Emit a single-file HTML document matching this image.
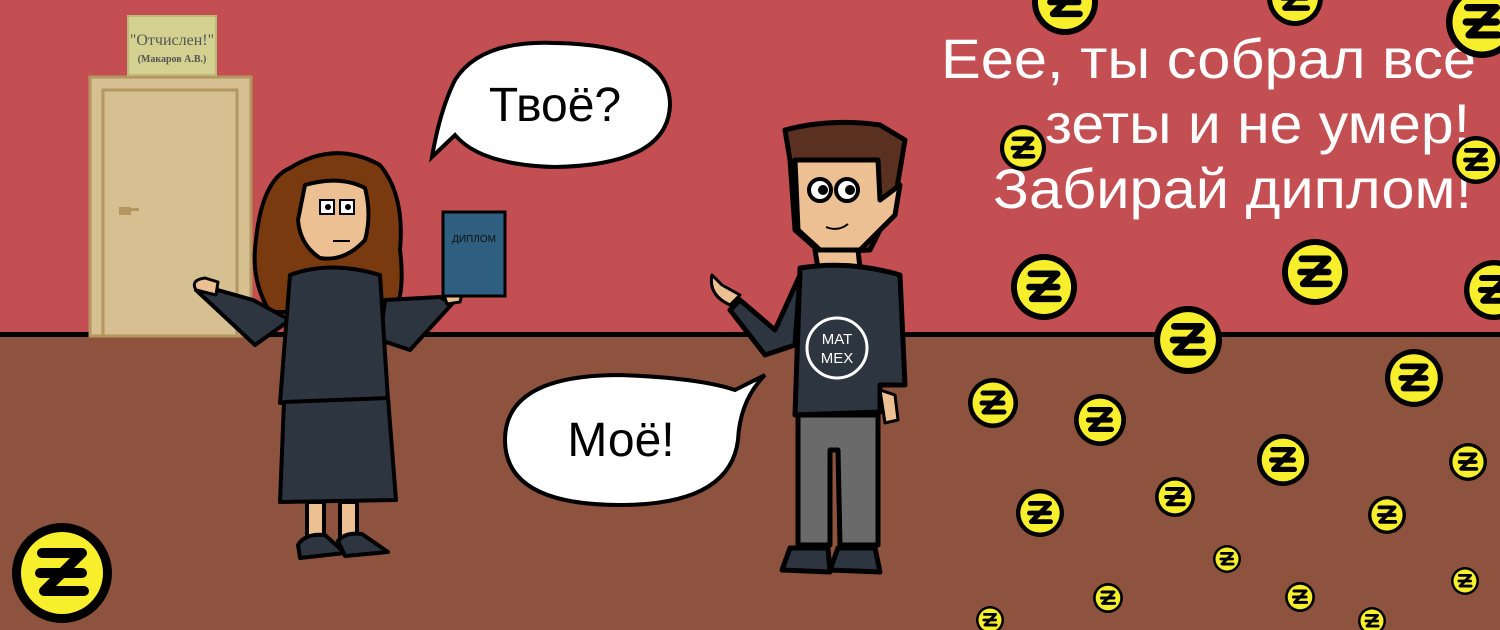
<!DOCTYPE html>
<html><head><meta charset="utf-8"><style>html,body{margin:0;padding:0;}svg{display:block}</style></head>
<body>
<svg width="1500" height="630" viewBox="0 0 1500 630" xmlns="http://www.w3.org/2000/svg" font-family="Liberation Sans, sans-serif">
<defs>
<g id="c">
<circle r="50" fill="#000"/><circle r="41" fill="#f8ef2c"/>
<path d="M-20,-20 H20 L-18,18 H22 M-22,0 H20" fill="none" stroke="#000" stroke-width="10" stroke-linecap="round" stroke-linejoin="round"/>
</g>
</defs>
<rect width="1500" height="336" fill="#c44f52"/>
<rect y="336" width="1500" height="294" fill="#8d533e"/>
<rect y="332" width="1500" height="5" fill="#000"/>

<!-- door -->
<rect x="90" y="77" width="161" height="259" fill="#d6bf91" stroke="#b39660" stroke-width="3"/>
<rect x="103" y="90" width="134" height="246" fill="#d6bf91" stroke="#b39660" stroke-width="3"/>
<rect x="119" y="207" width="12" height="8" fill="#b39660"/><rect x="130" y="208" width="9" height="3" fill="#b39660"/>
<!-- sign -->
<rect x="128" y="16" width="88" height="59" fill="#d4d090" stroke="#bcb877" stroke-width="2"/>
<text x="172" y="45" font-family="Liberation Serif, serif" font-size="16" fill="#555" text-anchor="middle">"Отчислен!"</text>
<text x="172" y="62" font-family="Liberation Serif, serif" font-size="10" font-weight="bold" fill="#555" text-anchor="middle">(Макаров А.В.)</text>

<!-- woman -->
<g stroke="#000" stroke-width="4" stroke-linejoin="round">
<path d="M290,168 Q335,140 380,165 Q405,195 400,250 Q405,290 395,312 L270,312 Q250,280 256,240 Q262,180 290,168Z" fill="#7a3a10"/>
<path d="M305,185 Q340,175 365,188 Q372,215 365,240 Q345,262 320,258 Q300,245 298,220Z" fill="#ecc093"/>
<path d="M253,300 L200,285 L196,290 L255,345 L290,320Z" fill="#2d3640"/>
<path d="M385,300 L440,297 L452,304 L410,350 L380,340Z" fill="#2d3640"/>
<path d="M290,275 Q330,260 380,275 L388,400 L280,403Z" fill="#2d3640"/>
<path d="M284,402 L388,398 L396,500 L280,502Z" fill="#2d3640"/>
<rect x="307" y="502" width="17" height="35" fill="#ecc093"/><rect x="340" y="502" width="17" height="35" fill="#ecc093"/>
<path d="M298,545 Q305,533 325,535 L345,553 L300,558Z" fill="#2d3640"/>
<path d="M338,541 Q345,532 362,534 L388,552 L345,556Z" fill="#2d3640"/>
<path d="M196,290 Q190,280 205,278 L218,282 L216,295Z" fill="#ecc093" stroke-width="3"/>
<path d="M443,292 L463,290 L460,302 L447,304Z" fill="#ecc093" stroke-width="3"/>
</g>
<rect x="320" y="200" width="14" height="14" fill="#fff" stroke="#000" stroke-width="2"/>
<rect x="340" y="200" width="14" height="14" fill="#fff" stroke="#000" stroke-width="2"/>
<circle cx="328" cy="207" r="3"/><circle cx="348" cy="207" r="3"/>
<line x1="333" y1="241" x2="350" y2="241" stroke="#000" stroke-width="2"/>
<rect x="443" y="212" width="62" height="84" fill="#2e5e80" stroke="#000" stroke-width="3"/>
<text x="474" y="242" font-size="10" text-anchor="middle" fill="#111">ДИПЛОМ</text>

<!-- man -->
<g stroke="#000" stroke-width="5" stroke-linejoin="round">
<path d="M790,160 L785,130 Q830,118 880,125 L905,140 L895,200 L870,250 L820,252 L795,230Z" fill="#5a3120"/>
<path d="M795,160 L878,160 L880,200 L900,185 L895,215 L875,235 L860,250 L820,250 L798,230Z" fill="#ecc093"/>
<path d="M815,250 L858,250 L860,268 L818,268Z" fill="#ecc093"/>
<path d="M800,268 Q850,260 900,275 L905,385 L880,385 L880,412 L795,415Z" fill="#2d3640"/>
<path d="M800,275 L775,330 L740,300 L730,310 L765,355 L795,345Z" fill="#2d3640"/>
<path d="M730,305 Q708,295 712,275 L722,285 L740,295Z" fill="#ecc093" stroke-width="3"/>
<path d="M880,390 L895,395 L898,420 L885,423Z" fill="#ecc093" stroke-width="3"/>
<path d="M798,415 L878,415 L878,545 L840,545 L838,450 L830,450 L830,545 L798,545Z" fill="#6a6a6a"/>
<path d="M782,570 L790,548 L828,548 L830,572Z" fill="#2d3640"/>
<path d="M830,570 L838,548 L875,548 L880,572Z" fill="#2d3640"/>
</g>
<circle cx="820" cy="190" r="11" fill="#fff" stroke="#000" stroke-width="4"/><circle cx="847" cy="190" r="11" fill="#fff" stroke="#000" stroke-width="4"/>
<circle cx="823" cy="190" r="5"/><circle cx="850" cy="190" r="5"/>
<path d="M826,227 Q838,232 848,224" fill="none" stroke="#000" stroke-width="2"/>
<circle cx="837" cy="348" r="30" fill="none" stroke="#fff" stroke-width="3"/>
<text x="837" y="344" font-size="15" fill="#fff" text-anchor="middle">MAT</text>
<text x="837" y="363" font-size="15" fill="#fff" text-anchor="middle">MEX</text>

<!-- bubbles -->
<g fill="#fff" stroke="#000" stroke-width="4">
<path d="M455,80 Q480,40 555,43 Q670,45 670,105 Q668,165 555,167 Q480,165 455,135 L432,157 Q440,110 455,80Z"/>
<path d="M505,440 Q505,375 620,375 Q700,378 735,390 L765,375 Q740,400 738,440 Q730,505 620,505 Q505,505 505,440Z"/>
</g>
<text x="555" y="121" font-size="48" text-anchor="middle">Твоё?</text>
<text x="621" y="456" font-size="48" text-anchor="middle">Моё!</text>

<!-- top-right text -->
<g fill="#fff" font-size="56">
<text x="941" y="78" textLength="535" lengthAdjust="spacingAndGlyphs">Еее, ты собрал все</text>
<text x="1045" y="143" textLength="425" lengthAdjust="spacingAndGlyphs">зеты и не умер!</text>
<text x="993" y="208" textLength="479" lengthAdjust="spacingAndGlyphs">Забирай диплом!</text>
</g>

<!-- coins -->
<use href="#c" transform="translate(1065,2) scale(0.66)"/>
<use href="#c" transform="translate(1295,-2) scale(0.56)"/>
<use href="#c" transform="translate(1482,22) scale(0.72)"/>
<use href="#c" transform="translate(1023,148) scale(0.46)"/>
<use href="#c" transform="translate(1476,160) scale(0.48)"/>
<use href="#c" transform="translate(1044,287) scale(0.66)"/>
<use href="#c" transform="translate(1315,272) scale(0.66)"/>
<use href="#c" transform="translate(1494,290) scale(0.6)"/>
<use href="#c" transform="translate(1188,340) scale(0.68)"/>
<use href="#c" transform="translate(1414,378) scale(0.58)"/>
<use href="#c" transform="translate(993,403) scale(0.5)"/>
<use href="#c" transform="translate(1100,420) scale(0.52)"/>
<use href="#c" transform="translate(1283,460) scale(0.52)"/>
<use href="#c" transform="translate(1468,462) scale(0.38)"/>
<use href="#c" transform="translate(1175,497) scale(0.4)"/>
<use href="#c" transform="translate(1040,513) scale(0.48)"/>
<use href="#c" transform="translate(1387,515) scale(0.38)"/>
<use href="#c" transform="translate(1227,559) scale(0.28)"/>
<use href="#c" transform="translate(1465,581) scale(0.28)"/>
<use href="#c" transform="translate(1108,598) scale(0.3)"/>
<use href="#c" transform="translate(1300,597) scale(0.3)"/>
<use href="#c" transform="translate(990,620) scale(0.28)"/>
<use href="#c" transform="translate(1372,621) scale(0.28)"/>
<use href="#c" transform="translate(62,573) scale(1)"/>
</svg>
</body></html>
